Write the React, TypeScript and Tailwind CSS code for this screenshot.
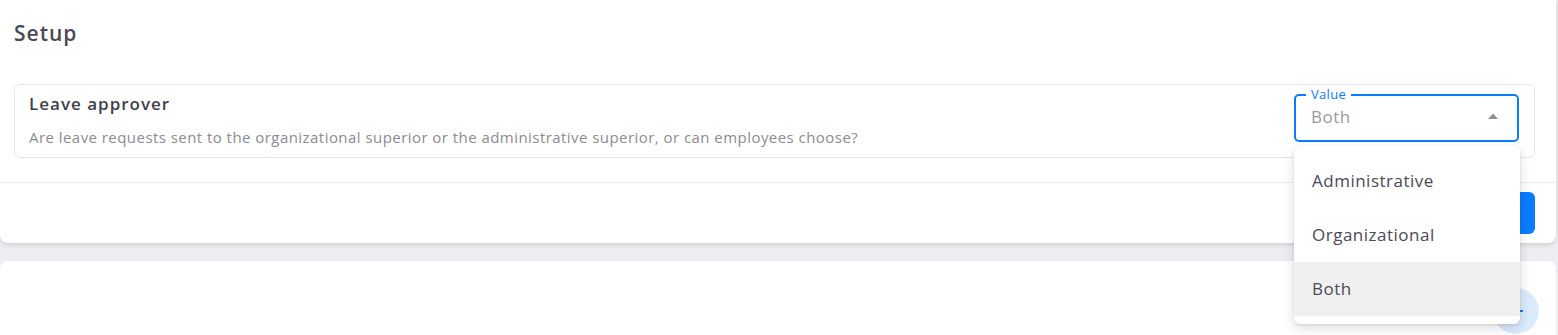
import React from "react";

export default function App() {
  const font = { fontFamily: '"Open Sans", "Noto Sans", sans-serif' };
  return (
    <div className="relative h-screen flex flex-col bg-[#ededf2] overflow-hidden" style={font}>
      <div className="mr-[2px] h-[243px] shrink-0 bg-white rounded-b-lg shadow-[0_2px_5px_rgba(0,0,0,0.12)] flex flex-col">
        <div className="h-[66px] pl-[14px] pt-[20px]">
          <h1 className="text-[21px] leading-[26px] font-semibold tracking-[1px] text-[#4a4a56]">Setup</h1>
        </div>
        <div className="pl-[14px] pr-[21px] pt-[18px]">
          <div className="h-[74px] border border-[#e6e6ea] rounded-md flex items-center justify-between pl-[14px] pr-[15px]">
            <div className="flex flex-col mt-[-2px]">
              <div className="text-[17px] leading-[20px] font-semibold tracking-[1px] text-[#3f3f4b]">Leave approver</div>
              <div className="mt-[14px] text-[15px] leading-[18px] tracking-[0.45px] text-[#8c8c91]">
                Are leave requests sent to the organizational superior or the administrative superior, or can employees choose?
              </div>
            </div>
            <div className="relative w-[225px] h-[48px] mt-[-7px]">
              <div className="absolute inset-0 border-2 border-[#0a7cff] rounded-[5px]" />
              <div className="absolute left-[12px] top-[-7px] px-[5px] bg-white text-[13px] leading-[14px] tracking-[0.3px] text-[#0a7cff]">Value</div>
              <div className="absolute left-[17px] top-[12px] text-[17px] leading-[22px] tracking-[0.5px] text-[#9a9a9e]">Both</div>
              <svg className="absolute right-[20px] top-[18px]" width="12" height="8" viewBox="0 0 12 8">
                <path d="M1 7 L6 1.5 L11 7 Z" fill="#8e8e93" />
              </svg>
            </div>
          </div>
        </div>
        <div className="mt-[24px] border-t border-[#ececef] flex-1 flex items-center justify-end pr-[21px]">
          <button className="w-[120px] h-[42px] rounded-md bg-[#0a7cff] text-white text-[15px] font-semibold">Save</button>
        </div>
      </div>
      <div className="mt-[18px] mr-[2px] flex-1 bg-white rounded-t-lg flex justify-end pr-[17px] pt-[27px]">
        <div className="w-[46px] h-[46px] rounded-full bg-[#dbeafd] flex items-center justify-center">
          <svg width="16" height="16" viewBox="0 0 16 16">
            <path d="M8 1 V15 M1 8 H15" stroke="#0a7cff" strokeWidth="2" />
          </svg>
        </div>
      </div>
      <div className="absolute left-[1294px] top-[146px] w-[226px] bg-white rounded-md shadow-[0_4px_12px_rgba(0,0,0,0.14),0_1px_3px_rgba(0,0,0,0.08)] py-[8px]">
        {["Administrative", "Organizational", "Both"].map((o) => (
          <div
            key={o}
            className={
              "h-[54px] flex items-center pl-[18px] text-[17px] tracking-[0.5px] text-[#4a4a56] " +
              (o === "Both" ? "bg-[#f0f0f1]" : "")
            }
          >
            {o}
          </div>
        ))}
      </div>
    </div>
  );
}
